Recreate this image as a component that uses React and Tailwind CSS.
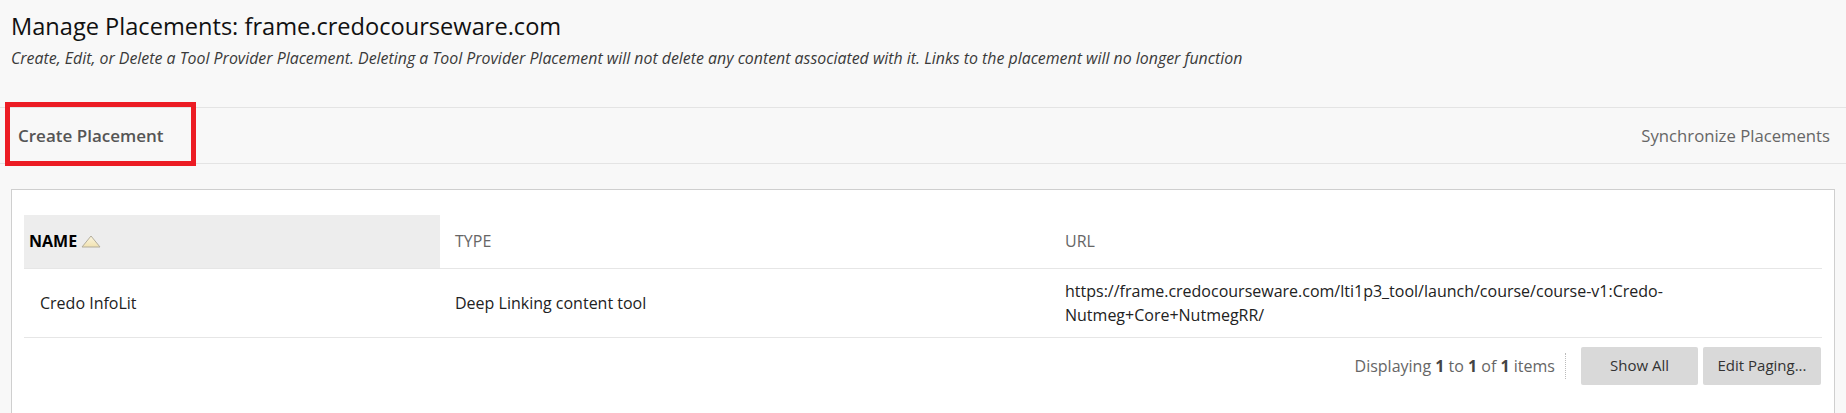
import React from "react";

function SortAscIcon() {
  return (
    <svg width="20" height="13" viewBox="0 0 20 13" className="inline-block">
      <defs>
        <linearGradient id="sortFill" x1="0" y1="0" x2="0" y2="1">
          <stop offset="0" stopColor="#fbf6e2" />
          <stop offset="1" stopColor="#f1e2b0" />
        </linearGradient>
      </defs>
      <path d="M10 1 L19 12 L1 12 Z" fill="url(#sortFill)" stroke="#b3ad9c" strokeWidth="1" strokeLinejoin="round" />
    </svg>
  );
}

export default function App() {
  return (
    <div className="min-h-screen bg-[#f8f8f8] font-['Open_Sans',sans-serif] text-[#333]">
      {/* Page heading */}
      <div className="px-[11px] pt-[10px]">
        <h1 className="text-[23.6px] leading-[32px] text-[#111]">
          Manage Placements: frame.credocourseware.com
        </h1>
        <p className="mt-[5px] text-[15.9px] leading-[22px] italic text-[#3a3a3a]">
          Create, Edit, or Delete a Tool Provider Placement. Deleting a Tool Provider Placement will not delete any content associated with it. Links to the placement will no longer function
        </p>
      </div>

      {/* Action bar */}
      <div className="mt-[38px] flex h-[57px] items-center justify-between border-y border-[#e4e4e4] pl-[18px] pr-[16px]">
        <div className="relative">
          <span className="text-[17px] font-semibold text-[#555]">Create Placement</span>
          <div className="pointer-events-none absolute left-[-13px] top-[-21px] h-[64px] w-[191px] border-[5px] border-[#ec1c24]" />
        </div>
        <span className="text-[16.7px] text-[#666]">Synchronize Placements</span>
      </div>

      {/* Placements list */}
      <div className="mx-[11px] mt-[25px] border border-[#cfcfcf] bg-white px-[12px] pb-[40px] pt-[25px]">
        <table className="w-full table-fixed border-collapse text-[16px]">
          <colgroup>
            <col className="w-[416px]" />
            <col className="w-[610px]" />
            <col />
          </colgroup>
          <thead>
            <tr className="h-[53px] border-b border-[#e6e6e6]">
              <th className="bg-[#ededed] pl-[5px] text-left font-bold text-black">
                <span className="inline-flex items-center gap-[4px]">
                  NAME
                  <SortAscIcon />
                </span>
              </th>
              <th className="pl-[15px] text-left font-normal text-[#666]">TYPE</th>
              <th className="pl-[15px] text-left font-normal text-[#666]">URL</th>
            </tr>
          </thead>
          <tbody>
            <tr className="border-b border-[#e6e6e6]">
              <td className="py-[10px] pl-[16px] align-middle leading-[24px] text-[#222]">Credo InfoLit</td>
              <td className="py-[10px] pl-[15px] align-middle leading-[24px] text-[#222]">Deep Linking content tool</td>
              <td className="py-[10px] pl-[15px] pr-[10px] align-middle leading-[24px] text-[#222]">
                https://frame.credocourseware.com/lti1p3_tool/launch/course/course-v1:Credo-Nutmeg+Core+NutmegRR/
              </td>
            </tr>
          </tbody>
        </table>

        {/* Paging controls */}
        <div className="mt-[9px] flex items-center justify-end">
          <span className="text-[16px] text-[#666]">
            Displaying <b className="font-bold text-[#444]">1</b> to <b className="font-bold text-[#444]">1</b> of <b className="font-bold text-[#444]">1</b> items
          </span>
          <span className="ml-[10px] h-[26px] border-l border-dotted border-[#bbb]" />
          <button className="ml-[15px] h-[38px] w-[117px] rounded-[2px] bg-[#d9d9d9] text-[15px] text-[#333]">
            Show All
          </button>
          <button className="ml-[5px] mr-[1px] h-[38px] w-[118px] rounded-[2px] bg-[#d9d9d9] text-[15px] text-[#333]">
            Edit Paging...
          </button>
        </div>
      </div>
    </div>
  );
}
